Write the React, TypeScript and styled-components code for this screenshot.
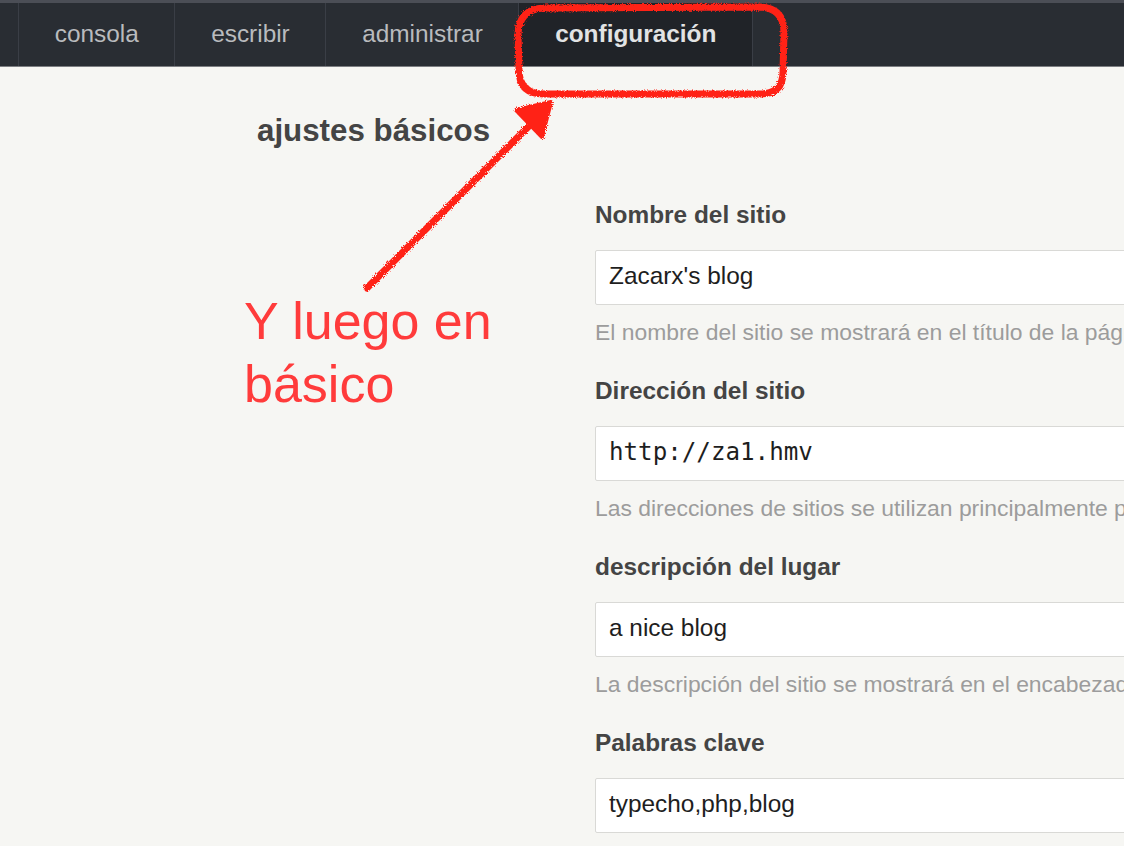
import React from "react";
import styled, { createGlobalStyle } from "styled-components";

const GlobalStyle = createGlobalStyle`
  html, body {
    margin: 0;
    padding: 0;
    background: #f6f6f3;
  }
  body {
    font-family: "Liberation Sans", Arial, sans-serif;
    overflow: hidden;
  }
`;

const Screen = styled.div`
  position: relative;
  width: 1124px;
  height: 846px;
  overflow: hidden;
  background: #f6f6f3;
`;

const TopBar = styled.nav`
  display: flex;
  height: 63px;
  padding-left: 18px;
  background: #292d33;
  border-top: 3px solid #4b4e56;
  border-bottom: 1px solid #7c7e82;
`;

const NavItem = styled.div<{ $active?: boolean }>`
  display: flex;
  align-items: center;
  padding: 0 35.7px 2px;
  border-left: 1px solid #3a3e46;
  font-size: 24.4px;
  font-weight: ${(p) => (p.$active ? 700 : 400)};
  color: ${(p) => (p.$active ? "#e2e3e4" : "#b9bbbe")};
  background: ${(p) => (p.$active ? "#202328" : "transparent")};
  white-space: nowrap;
  &:last-child {
    border-right: 1px solid #3a3e46;
  }
`;

const Main = styled.main`
  padding: 44px 0 0 257px;
`;

const Title = styled.h2`
  margin: 0;
  font-size: 31.3px;
  line-height: 40px;
  font-weight: 700;
  color: #444;
`;

const Form = styled.div`
  margin: 47px 0 0 338px;
  display: flex;
  flex-direction: column;
  gap: 25px;
`;

const Group = styled.div`
  display: flex;
  flex-direction: column;
`;

const Label = styled.div`
  font-size: 24.4px;
  line-height: 34px;
  font-weight: 700;
  color: #444;
  margin-bottom: 18px;
  white-space: nowrap;
`;

const Field = styled.div<{ $mono?: boolean }>`
  box-sizing: border-box;
  display: flex;
  align-items: center;
  width: 620px;
  height: 55px;
  padding: 0 13px 3px;
  background: #fff;
  border: 1px solid #d9d9d6;
  border-radius: 2px;
  color: #1e1e1e;
  font-family: ${(p) =>
    p.$mono ? '"DejaVu Sans Mono", "Liberation Mono", monospace' : '"Liberation Sans", Arial, sans-serif'};
  font-size: ${(p) => (p.$mono ? "24.2px" : "24.4px")};
  white-space: nowrap;
`;

const Hint = styled.div`
  margin-top: 10px;
  font-size: 22.9px;
  line-height: 34px;
  color: #9c9c9c;
  white-space: nowrap;
`;

const Overlay = styled.svg`
  position: absolute;
  left: 0;
  top: 0;
  width: 1124px;
  height: 846px;
  pointer-events: none;
`;

const Note = styled.div`
  position: absolute;
  left: 244px;
  top: 290px;
  font-size: 52px;
  line-height: 63px;
  color: #ff3b3b;
  pointer-events: none;
`;

const fields = [
  {
    label: "Nombre del sitio",
    value: "Zacarx's blog",
    hint: "El nombre del sitio se mostrará en el título de la página.",
  },
  {
    label: "Dirección del sitio",
    value: "http://za1.hmv",
    mono: true,
    hint: "Las direcciones de sitios se utilizan principalmente para generar enlaces.",
  },
  {
    label: "descripción del lugar",
    value: "a nice blog",
    hint: "La descripción del sitio se mostrará en el encabezado de la página.",
  },
  {
    label: "Palabras clave",
    value: "typecho,php,blog",
    hint: "Separe varias palabras clave con comas.",
  },
];

export default function App() {
  return (
    <Screen>
      <GlobalStyle />
      <TopBar>
        <NavItem>consola</NavItem>
        <NavItem>escribir</NavItem>
        <NavItem>administrar</NavItem>
        <NavItem $active>configuración</NavItem>
      </TopBar>
      <Main>
        <Title>ajustes básicos</Title>
        <Form>
          {fields.map((f) => (
            <Group key={f.label}>
              <Label>{f.label}</Label>
              <Field $mono={f.mono}>{f.value}</Field>
              <Hint>{f.hint}</Hint>
            </Group>
          ))}
        </Form>
      </Main>
      <Overlay viewBox="0 0 1124 846">
        <defs>
          <filter id="rough" x="-5%" y="-5%" width="110%" height="110%">
            <feTurbulence type="fractalNoise" baseFrequency="0.9" numOctaves="2" seed="3" />
            <feDisplacementMap in="SourceGraphic" scale="4" />
          </filter>
        </defs>
        <g filter="url(#rough)" stroke="#ff2418" fill="none" strokeLinecap="round" strokeLinejoin="round">
          <path
            d="M544 8 L760 7 Q784 8 784 32 L783 72 Q783 94 760 94 L544 94 Q519 94 519 70 L518 34 Q519 9 544 8 Z"
            strokeWidth="7"
          />
          <path d="M367 288 L538 117" strokeWidth="7" />
          <polygon points="516,110 551,102 542,137" fill="#ff2418" strokeWidth="4" />
        </g>
      </Overlay>
      <Note>
        Y luego en
        <br />
        básico
      </Note>
    </Screen>
  );
}
